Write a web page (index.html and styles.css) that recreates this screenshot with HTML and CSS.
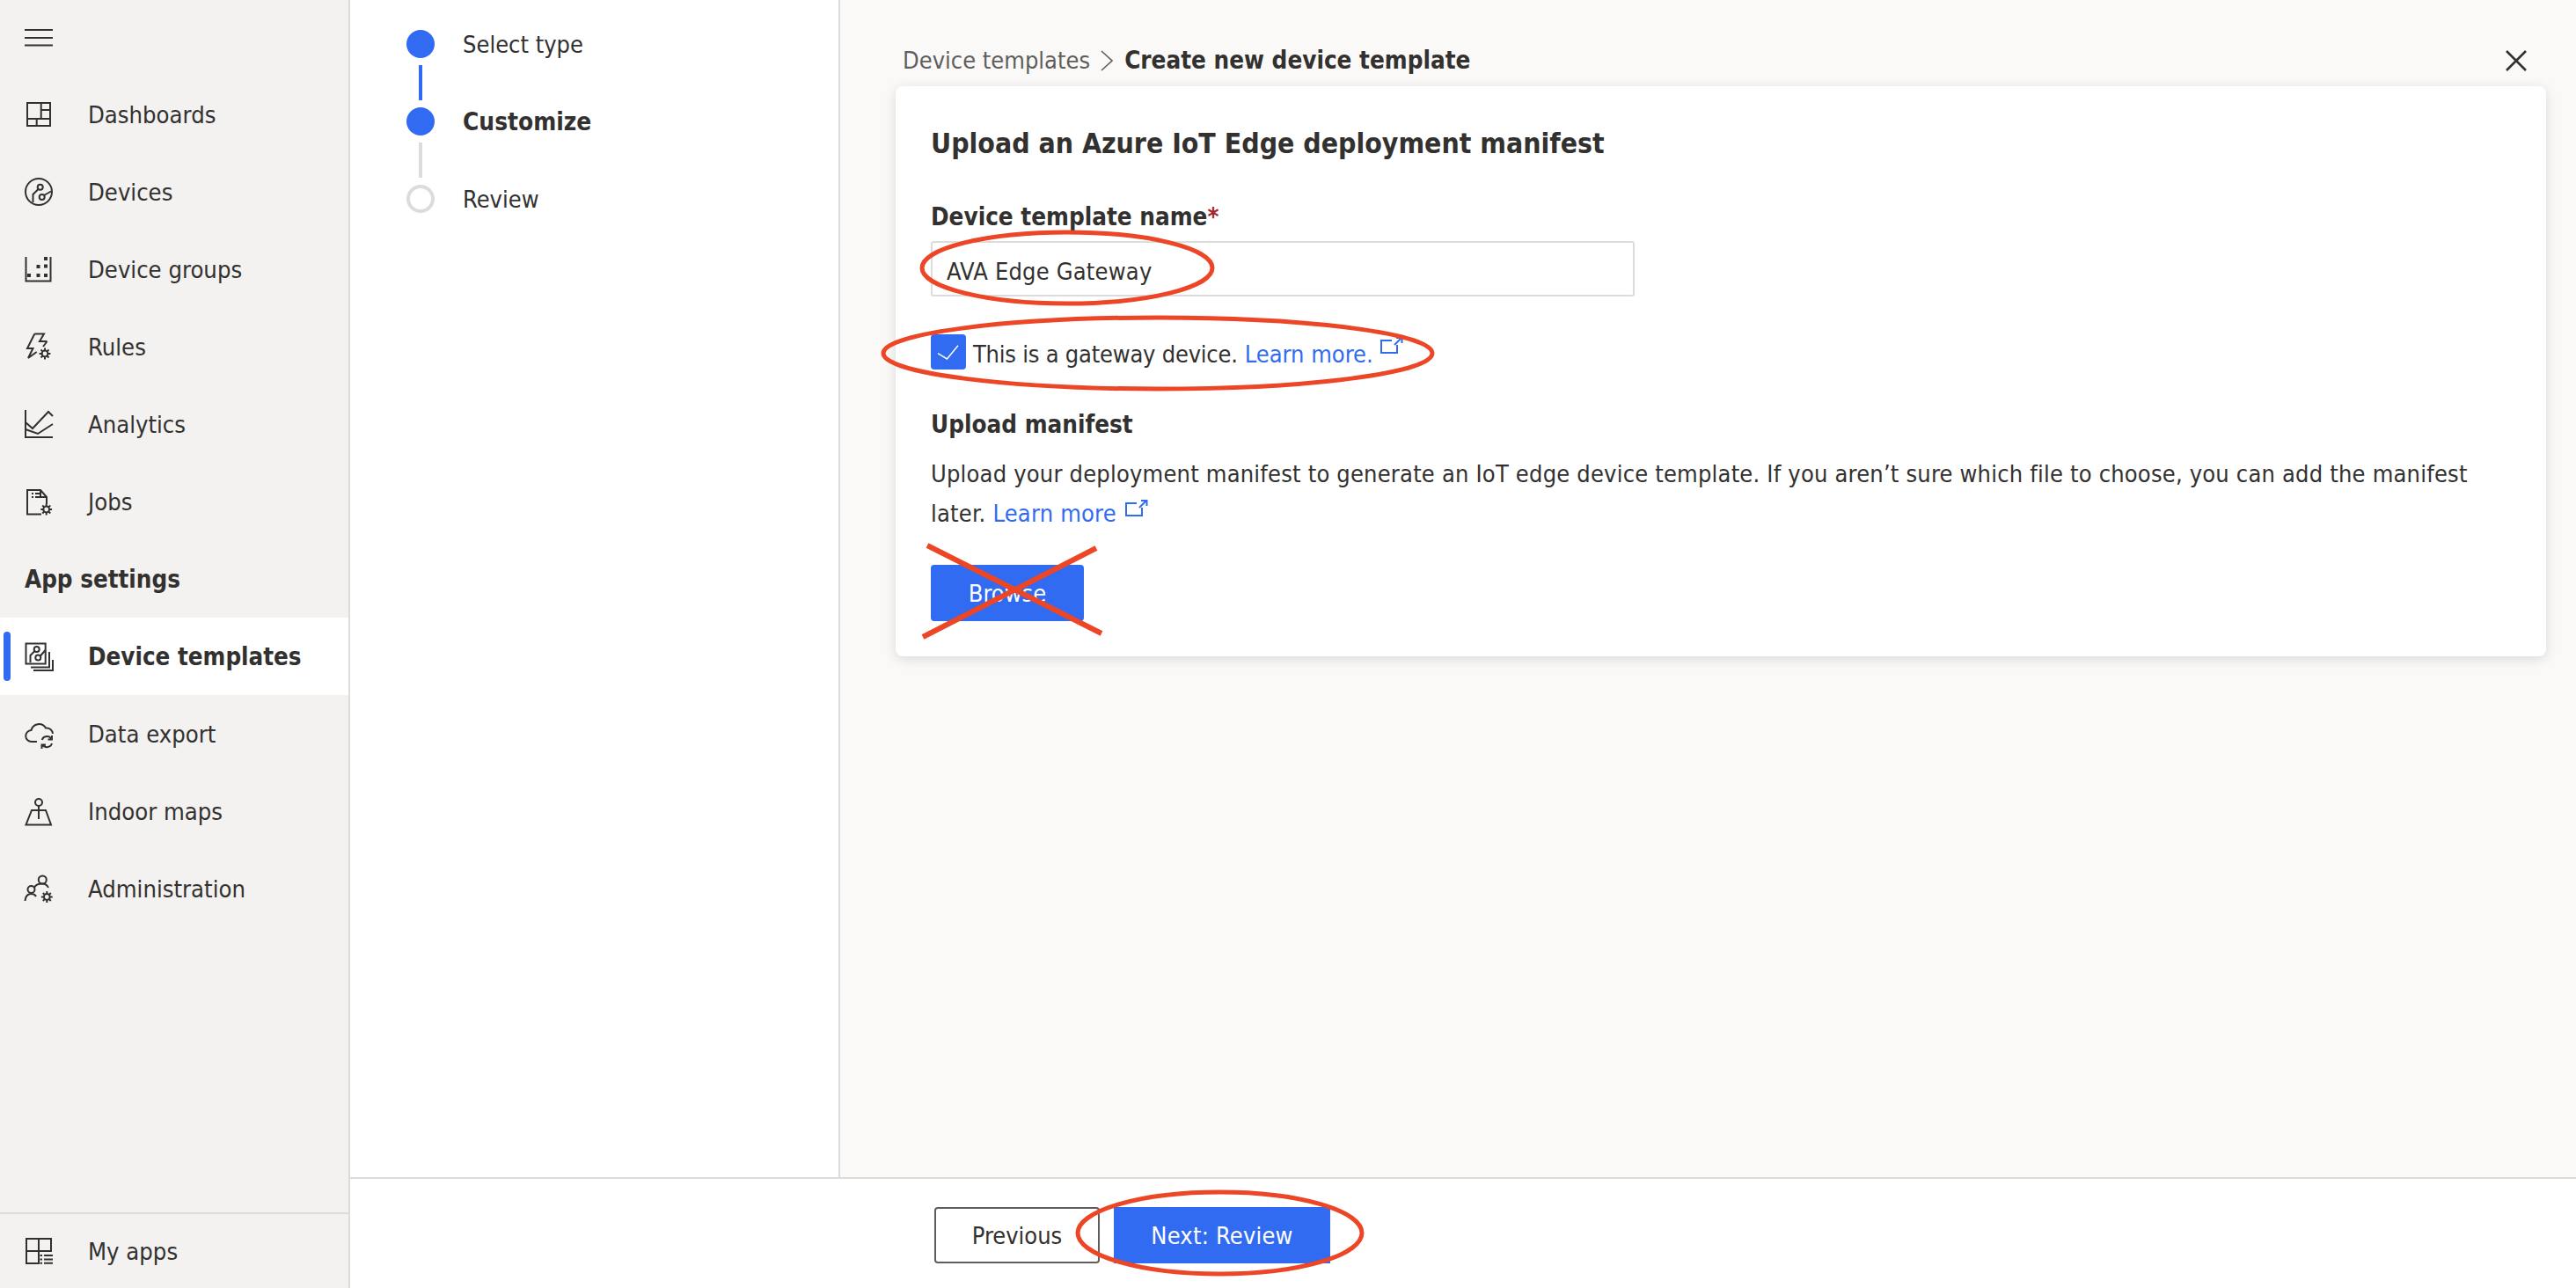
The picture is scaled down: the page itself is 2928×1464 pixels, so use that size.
FILE: index.html
```html
<!DOCTYPE html>
<html lang="en">
<head>
<meta charset="utf-8">
<title>Create new device template</title>
<link rel="stylesheet" href="styles.css">
</head>
<body>
<svg class="defs" width="0" height="0" aria-hidden="true">
  <defs>
    <g id="gear">
      <circle r="3.4"/>
      <path d="M0-3.4V-6.4M0 3.4V6.4M-3.4 0H-6.4M3.4 0H6.4M-2.4-2.4L-4.5-4.5M2.4-2.4L4.5-4.5M-2.4 2.4L-4.5 4.5M2.4 2.4L4.5 4.5"/>
    </g>
  </defs>
</svg>
<div class="app">
  <aside class="sidebar">
    <div class="menu-row">
      <svg class="icon" viewBox="0 0 32 32"><path d="M0 7H32M0 16H32M0 24.5H32"/></svg>
    </div>
    <nav class="nav">
      <a class="nav-item"><svg class="icon" viewBox="0 0 32 32"><path d="M3 3H29V29H3ZM18.7 3V21M18.7 11H29M3 21H29M13.7 21V29"/></svg><span>Dashboards</span></a>
      <a class="nav-item"><svg class="icon" viewBox="0 0 32 32"><circle cx="16" cy="16" r="15"/><circle cx="17.7" cy="10.7" r="3"/><circle cx="19.7" cy="22" r="3"/><path d="M22 20L30 15.5M15.5 13L9.5 19V28"/></svg><span>Devices</span></a>
      <a class="nav-item"><svg class="icon" viewBox="0 0 32 32"><path d="M1.5 2V29.5H29.5V2"/><path class="fill" d="M3 21h4v4H3zM13.5 21h4v4h-4zM22 21h4v4h-4zM13.5 11h4v4h-4zM22 10.5h4v4h-4zM22 2h4v4h-4z"/></svg><span>Device groups</span></a>
      <a class="nav-item"><svg class="icon" viewBox="0 0 32 32"><path d="M11.3 1.5H22L17 10H25.5M11.3 1.5L3 18H9.5L4 29L13.7 22M25.5 10L21 16"/><use href="#gear" x="23" y="24"/></svg><span>Rules</span></a>
      <a class="nav-item"><svg class="icon" viewBox="0 0 32 32"><path d="M1 0V31H32M1 14L9 21L27 2L32 7M1 22L15 27L32 16"/></svg><span>Analytics</span></a>
      <a class="nav-item"><svg class="icon" viewBox="0 0 32 32"><path d="M19 30.5H3V3H18L25 11V19M18 3V11H25M8 7H10M8 11H10M12 7H18M12 11H18"/><use href="#gear" x="24.7" y="25"/></svg><span>Jobs</span></a>
      <div class="nav-heading">App settings</div>
      <a class="nav-item is-active"><i class="active-bar"></i><svg class="icon" viewBox="0 0 32 32"><path d="M1.5 1.5H23.7V24.5H1.5ZM28 11V28.5H7M32 20V32H10"/><circle cx="13.7" cy="8" r="3"/><circle cx="15.3" cy="17.6" r="3"/><path d="M18 15.5L23.5 9M11.5 10L6.5 15V23"/></svg><span>Device templates</span></a>
      <a class="nav-item"><svg class="icon" viewBox="0 0 32 32"><path d="M14 25H8A6.5 6.5 0 0 1 7.5 12A9 9 0 0 1 24 9.5A7 7 0 0 1 32 16M19.7 23A6 6 0 0 1 30.5 22M31 27A6 6 0 0 1 20 28M31 18V22.5H26.5M19.5 33V28.5H24"/></svg><span>Data export</span></a>
      <a class="nav-item"><svg class="icon" viewBox="0 0 32 32"><circle cx="16" cy="6" r="4"/><path d="M16 10V25M8 15H24L30 31.5H1.5Z"/></svg><span>Indoor maps</span></a>
      <a class="nav-item"><svg class="icon" viewBox="0 0 32 32"><circle cx="20.3" cy="6" r="4.5"/><circle cx="7.5" cy="17" r="4"/><path d="M0.5 30C1 24.5 4 22 7.5 22C10 22 12 23 13 25M11 15C12 12 15 10.5 20 10.5C24 10.5 26 12.5 27 15"/><use href="#gear" x="25.3" y="25.5"/></svg><span>Administration</span></a>
    </nav>
    <a class="nav-item apps-item"><svg class="icon" viewBox="0 0 32 32"><path d="M16 16H2V30H16V2M2 16V2H30V16H16"/><path d="M17.5 21H20M17.5 25.5H20M17.5 29.8H20M22 21H32M22 25.5H32M22 29.8H32"/></svg><span>My apps</span></a>
  </aside>

  <div class="workspace">
    <div class="panels">
      <ol class="steps">
        <li class="step"><i class="dot"></i><span>Select type</span></li>
        <li class="connector done"></li>
        <li class="step current"><i class="dot"></i><span>Customize</span></li>
        <li class="connector"></li>
        <li class="step"><i class="dot empty"></i><span>Review</span></li>
      </ol>
      <main class="content">
        <header class="crumbs">
          <div class="trail">
            <span class="crumb-link">Device templates</span>
            <svg class="chevron" viewBox="0 0 14 24"><path d="M1 1L13 12L1 23"/></svg>
            <strong class="crumb-current">Create new device template</strong>
          </div>
          <svg class="close" viewBox="0 0 24 24"><path d="M1 1L23 23M23 1L1 23"/></svg>
        </header>
        <section class="card">
          <h1 class="card-title">Upload an Azure IoT Edge deployment manifest</h1>
          <label class="field-label">Device template name<span class="req">*</span></label>
          <div class="text-input"><span class="input-value">AVA Edge Gateway</span></div>
          <div class="check-row">
            <span class="checkbox"><svg viewBox="0 0 40 40"><path d="M8 21.7L18.4 28L31 12.7"/></svg></span>
            <span class="check-text">This is a gateway device.</span>
            <a class="link check-link">Learn more.</a>
            <svg class="ext" viewBox="0 0 26 20"><path d="M13 4H1V18H19V9M16 9L24 1M18 1H24.5V7"/></svg>
          </div>
          <h2 class="sub-title">Upload manifest</h2>
          <p class="desc">Upload your deployment manifest to generate an IoT edge device template. If you aren’t sure which file to choose, you can add the manifest<br>later. <a class="link">Learn more</a><svg class="ext ext-inline" viewBox="0 0 26 20"><path d="M13 4H1V18H19V9M16 9L24 1M18 1H24.5V7"/></svg></p>
          <button class="btn primary browse">Browse</button>
        </section>
      </main>
    </div>
    <footer class="footer">
      <button class="btn outline">Previous</button>
      <button class="btn primary next">Next: Review</button>
    </footer>
  </div>
</div>
<svg class="marks" viewBox="0 0 2928 1464" aria-hidden="true">
  <ellipse cx="1213" cy="304.5" rx="165" ry="40.5"/>
  <ellipse cx="1316" cy="401.5" rx="312" ry="40.5"/>
  <ellipse cx="1386.5" cy="1401.5" rx="161.5" ry="46.5"/>
  <path class="slash" d="M1054 620L1252 720M1049 724L1246 623"/>
</svg>
</body>
</html>
```
FILE: styles.css
```css
* { box-sizing: border-box; }
html, body { margin: 0; padding: 0; }
body {
  width: 2928px;
  height: 1464px;
  overflow: hidden;
  position: relative;
  font-family: "DejaVu Sans Condensed", "DejaVu Sans", sans-serif;
  font-stretch: condensed;
  font-size: 27px;
  color: #323130;
  background: #fff;
}
.defs { position: absolute; }
.app { display: flex; height: 1464px; }

.icon { width: 32px; height: 32px; flex: none; fill: none; stroke: #323130; stroke-width: 2; overflow: visible; }
.icon .fill { fill: #323130; stroke: none; }

.sidebar {
  width: 398px;
  flex: none;
  display: flex;
  flex-direction: column;
  background: #f3f2f1;
  border-right: 2px solid #dddcdb;
  font-size: 27.2px;
}
.menu-row { height: 86px; padding-left: 28px; display: flex; align-items: center; }
.nav { flex: 1; display: flex; flex-direction: column; }
.nav-item {
  position: relative;
  height: 88px;
  flex: none;
  display: flex;
  align-items: center;
  gap: 40px;
  padding-left: 28px;
}
.nav-heading { height: 88px; display: flex; align-items: center; padding-left: 28px; font-weight: 700; font-size: 27.5px; }
.is-active { background: #fff; font-weight: 700; font-size: 27.5px; }
.active-bar { position: absolute; left: 4px; top: 16px; width: 8px; height: 56px; border-radius: 4px; background: #316bf2; }
.apps-item { height: 86px; border-top: 2px solid #dddcdb; }

.workspace { flex: 1; display: flex; flex-direction: column; min-width: 0; }
.panels { flex: 1; display: flex; min-height: 0; }

.steps {
  width: 557px;
  flex: none;
  list-style: none;
  margin: 0;
  padding: 34px 0 0 64px;
  border-right: 2px solid #dddcdb;
  background: #fff;
}
.step { display: flex; align-items: center; gap: 32px; height: 32px; }
.step.current { font-weight: 700; font-size: 27.8px; }
.dot { width: 32px; height: 32px; border-radius: 50%; background: #316bf2; flex: none; }
.dot.empty { background: #fff; border: 4px solid #dddcdb; }
.connector { width: 4px; height: 40px; margin: 8px 0 8px 14px; background: #dddcdb; }
.connector.done { background: #316bf2; }

.content { flex: 1; min-width: 0; background: #faf9f8; padding: 0 34px 0 63px; }
.crumbs { display: flex; align-items: center; justify-content: space-between; height: 98px; padding: 49px 22px 9px 8px; }
.trail { display: flex; align-items: center; line-height: 40px; }
.crumb-link { color: #605e5c; }
.crumb-current { font-size: 27.6px; }
.chevron { width: 14px; height: 24px; margin: 0 13px 0 12px; fill: none; stroke: #605e5c; stroke-width: 1.6; }
.close { width: 24px; height: 24px; fill: none; stroke: #323130; stroke-width: 2.6; }

.card {
  background: #fff;
  border-radius: 8px;
  box-shadow: 0 3px 14px rgba(0, 0, 0, .13);
  padding: 43px 40px 40px;
}
.card-title { margin: 0 0 42px; font-size: 31.7px; line-height: 44px; font-weight: 700; }
.field-label { display: block; font-weight: 700; font-size: 27.6px; line-height: 40px; margin-bottom: 7px; }
.req { color: #a4262c; }
.text-input {
  width: 800px;
  height: 63px;
  border: 2px solid #dddcdb;
  border-radius: 3px;
  padding: 5px 0 0 16px;
  display: flex;
  align-items: center;
  margin-bottom: 43px;
}
.input-value { letter-spacing: .2px; }
.check-row { display: flex; align-items: center; height: 40px; margin-bottom: 43px; }
.checkbox { width: 40px; height: 40px; border-radius: 4px; background: #316bf2; flex: none; margin-right: 8px; }
.checkbox svg { display: block; fill: none; stroke: #fff; stroke-width: 1.5; }
.check-text { margin-right: 8px; letter-spacing: -.22px; padding-top: 4px; }
.check-link { padding-top: 4px; }
.link { color: #316bf2; }
.ext { width: 26px; height: 20px; margin: -14px 0 0 8px; fill: none; stroke: #316bf2; stroke-width: 2; flex: none; }
.ext-inline { margin: 0 0 0 10px; vertical-align: 5px; }
.sub-title { margin: 0 0 13px; font-size: 27.6px; line-height: 40px; font-weight: 700; }
.desc { margin: 0 0 36px; line-height: 45px; white-space: nowrap; letter-spacing: .2px; }

.btn { font: inherit; height: 64px; border-radius: 4px; cursor: pointer; }
.primary { background: #316bf2; color: #fff; border: 0; }
.browse { width: 174px; display: block; }
.footer { height: 126px; flex: none; border-top: 2px solid #dddcdb; padding: 32px 0 0 664px; display: flex; gap: 16px; background: #fff; }
.outline { width: 188px; background: #fff; color: #323130; border: 2px solid #605e5c; }
.next { width: 246px; border-radius: 0; letter-spacing: .2px; }

.marks { position: absolute; left: 0; top: 0; width: 2928px; height: 1464px; pointer-events: none; fill: none; stroke: #ec4626; stroke-width: 5; }
.marks .slash { stroke-width: 6; }
```
